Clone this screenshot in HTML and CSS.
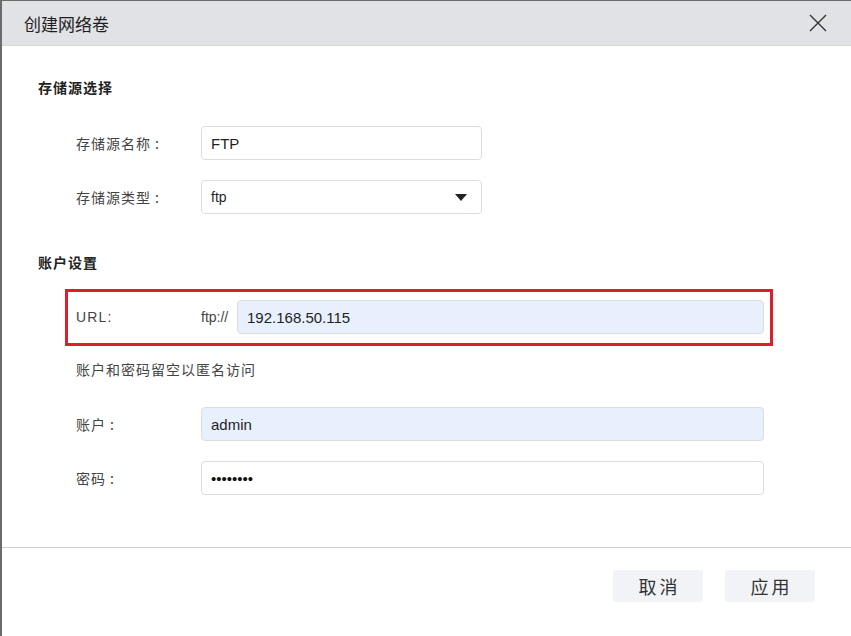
FILE: index.html
```html
<!DOCTYPE html>
<html lang="zh">
<head>
<meta charset="utf-8">
<title>创建网络卷</title>
<link rel="stylesheet" href="styles.css">
</head>
<body>
<div class="dialog">
  <div class="header">
    <span class="title">创建网络卷</span>
    <button class="close" aria-label="关闭">
      <svg width="18" height="18" viewBox="0 0 18 18"><path d="M1 1 L17 17 M17 1 L1 17" stroke="#333" stroke-width="1.4" fill="none"/></svg>
    </button>
  </div>
  <div class="content">
    <div class="section-title first">存储源选择</div>
    <div class="row">
      <label class="label">存储源名称<span class="colon">:</span></label>
      <div class="input short">FTP</div>
    </div>
    <div class="row gap">
      <label class="label">存储源类型<span class="colon">:</span></label>
      <div class="input short select">
        <span>ftp</span>
        <svg class="caret" width="12" height="7" viewBox="0 0 12 7"><path d="M0 0 H12 L6 7 Z" fill="#222"/></svg>
      </div>
    </div>
    <div class="section-title second">账户设置</div>
    <div class="highlight">
      <div class="row url-row">
        <label class="label">URL:</label>
        <span class="prefix">ftp://</span>
        <div class="input wide autofill">192.168.50.115</div>
      </div>
    </div>
    <div class="hint">账户和密码留空以匿名访问</div>
    <div class="row account">
      <label class="label">账户<span class="colon">:</span></label>
      <div class="input wide autofill">admin</div>
    </div>
    <div class="row gap">
      <label class="label">密码<span class="colon">:</span></label>
      <div class="input wide dots">••••••••</div>
    </div>
  </div>
  <div class="footer">
    <button class="btn">取消</button>
    <button class="btn">应用</button>
  </div>
</div>
</body>
</html>
```
FILE: styles.css
```css
html, body {
  margin: 0;
  padding: 0;
  background: #ffffff;
}
body {
  font-family: "Liberation Sans", "Noto Sans CJK SC", sans-serif;
  color: #333;
}
.dialog {
  width: 851px;
  height: 636px;
  box-sizing: border-box;
  border-left: 2px solid #6b6b6b;
  border-top: 1px solid #6b6b6b;
  display: flex;
  flex-direction: column;
  background: #fff;
}
.header {
  flex: none;
  height: 44px;
  background: #e1e2e6;
  border-bottom: 1px solid #d6d7db;
  display: flex;
  align-items: center;
  justify-content: space-between;
  padding: 0 22px;
}
.title {
  font-family: "Noto Sans CJK SC", sans-serif;
  font-size: 17px;
  color: #1f1f1f;
  margin-top: 1px;
}
.close {
  background: none;
  border: none;
  padding: 0;
  width: 18px;
  height: 18px;
  margin-right: 2px;
  cursor: pointer;
}
.close svg { display: block; }
.content {
  flex: 1;
  padding: 0 0 0 36px;
  display: flex;
  flex-direction: column;
}
.section-title {
  font-family: "Noto Sans CJK SC", sans-serif;
  font-size: 14px;
  font-weight: bold;
  letter-spacing: 1px;
  color: #222;
  line-height: 20px;
}
.section-title.first { margin-top: 31px; margin-bottom: 29px; }
.section-title.second { margin-top: 38px; margin-bottom: 17px; }
.row {
  display: flex;
  align-items: center;
  padding-left: 38px;
  height: 34px;
}
.row.gap { margin-top: 20px; }
.label {
  width: 125px;
  flex: none;
  font-family: "Noto Sans CJK SC", sans-serif;
  font-size: 14px;
  letter-spacing: 1px;
  color: #444;
}
.colon { margin-left: 4px; }
.url-row .label {
  font-family: "Liberation Sans", sans-serif;
  font-size: 14px;
  letter-spacing: 1.2px;
}
.input {
  box-sizing: border-box;
  height: 34px;
  border: 1px solid #dcdde1;
  border-radius: 4px;
  background: #fff;
  display: flex;
  align-items: center;
  padding-left: 9px;
  font-size: 15px;
  color: #1f1f1f;
}
.input.short { width: 281px; }
.input.wide { flex: 0 0 auto; width: 563px; }
.input.select {
  justify-content: space-between;
  padding-right: 14px;
  font-size: 14px;
}
.caret { display: block; margin-top: 1px; }
.autofill { background: #e8f0fe; }
.dots { font-size: 15px; letter-spacing: 0; color: #111; }
.highlight {
  margin-left: 27px;
  width: 708px;
  box-sizing: border-box;
  border: 3px solid #d9202c;
  padding: 8px 0 9px 0;
}
.highlight .row { padding-left: 8px; }
.prefix {
  font-size: 14px;
  color: #444;
  width: 36px;
  flex: none;
}
.url-row .input.wide { width: 527px; }
.hint {
  font-family: "Noto Sans CJK SC", sans-serif;
  font-size: 14px;
  letter-spacing: 1px;
  color: #444;
  margin: 13px 0 0 38px;
  line-height: 20px;
}
.row.account { margin-top: 28px; }
.footer {
  flex: none;
  height: 89px;
  border-top: 1px solid #cfcfcf;
  display: flex;
  justify-content: flex-end;
  align-items: flex-start;
  padding: 22px 36px 0 0;
  gap: 22px;
  box-sizing: border-box;
}
.btn {
  width: 90px;
  height: 32px;
  border: none;
  border-radius: 3px;
  background: #f1f3f7;
  font-family: "Noto Sans CJK SC", sans-serif;
  font-size: 18px;
  letter-spacing: 3px;
  color: #333;
  padding: 0 0 0 3px;
  cursor: pointer;
}
```
